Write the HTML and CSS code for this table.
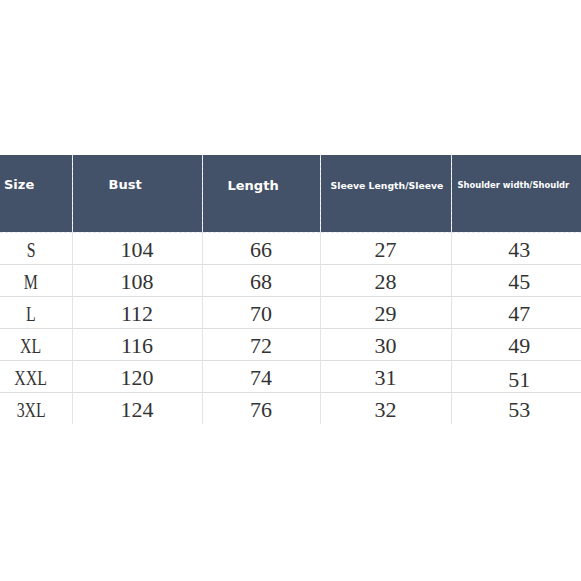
FILE: index.html
```html
<!DOCTYPE html>
<html>
<head>
<meta charset="utf-8">
<link rel="stylesheet" href="styles.css">
</head>
<body>
<div class="page">
<table class="sizes">
<colgroup>
<col class="c1"><col class="c2"><col class="c3"><col class="c4"><col class="c5">
</colgroup>
<thead>
<tr>
<th class="h1">Size</th>
<th class="h2">Bust</th>
<th class="h3">Length</th>
<th class="h4 small">Sleeve Length/Sleeve</th>
<th class="h5 small">Shoulder width/Shouldr</th>
</tr>
</thead>
<tbody>
<tr><td class="sz"><span class="nar">S</span></td><td>104</td><td>66</td><td>27</td><td class="sh">43</td></tr>
<tr><td class="sz"><span class="nar">M</span></td><td>108</td><td>68</td><td>28</td><td class="sh">45</td></tr>
<tr><td class="sz"><span class="nar">L</span></td><td>112</td><td>70</td><td>29</td><td class="sh">47</td></tr>
<tr><td class="sz"><span class="nar">XL</span></td><td>116</td><td>72</td><td>30</td><td class="sh">49</td></tr>
<tr><td class="sz"><span class="nar">XXL</span></td><td>120</td><td>74</td><td>31</td><td class="sh low">51</td></tr>
<tr><td class="sz"><span class="nar">3XL</span></td><td>124</td><td>76</td><td>32</td><td class="sh">53</td></tr>
</tbody>
</table>
</div>
</body>
</html>
```
FILE: styles.css
```css
html, body {
  margin: 0;
  padding: 0;
  background: #ffffff;
}
.page {
  width: 581px;
  height: 581px;
  padding-top: 155px;
  box-sizing: border-box;
}
.sizes {
  width: 581px;
  border-collapse: collapse;
  table-layout: fixed;
}
.c1 { width: 72px; }
.c2 { width: 130px; }
.c3 { width: 118px; }
.c4 { width: 131px; }
.c5 { width: 130px; }
thead th {
  background: #435269;
  color: #ffffff;
  font-family: "DejaVu Sans", sans-serif;
  font-weight: bold;
  font-size: 13px;
  text-align: left;
  vertical-align: top;
  height: 77px;
  box-sizing: border-box;
  padding: 22px 0 0 0;
  white-space: nowrap;
  overflow: hidden;
  border-right: 1px dashed rgba(200, 208, 222, 0.55);
  border-bottom: 1px dashed rgba(200, 208, 222, 0.45);
}
thead th:last-child { border-right: none; }
.h1 { padding-left: 4px; }
.h2 { padding-left: 36px; }
.h3 { padding-left: 25px; padding-top: 23px; }
.small {
  padding-top: 25px;
}
.h4 { padding-left: 10px; font-size: 9.3px; }
.h5 { padding-left: 6px; font-size: 8.4px; }
tbody td {
  font-family: "Liberation Serif", "Times New Roman", serif;
  font-size: 22px;
  color: #333333;
  text-align: center;
  height: 32px;
  box-sizing: border-box;
  padding: 2px 0 0 0;
  line-height: 29px;
  border-right: 1px solid #e4e4e4;
  border-bottom: 1px solid #dcdcdc;
}
tbody tr:last-child td { border-bottom: none; }
tbody td:last-child { border-right: none; }
.sz { padding-right: 10px; }
.nar {
  display: inline-block;
  transform: scaleX(0.72);
}
.sh { padding-left: 6px; }
.low { padding-top: 6px; line-height: 25px; }
```
